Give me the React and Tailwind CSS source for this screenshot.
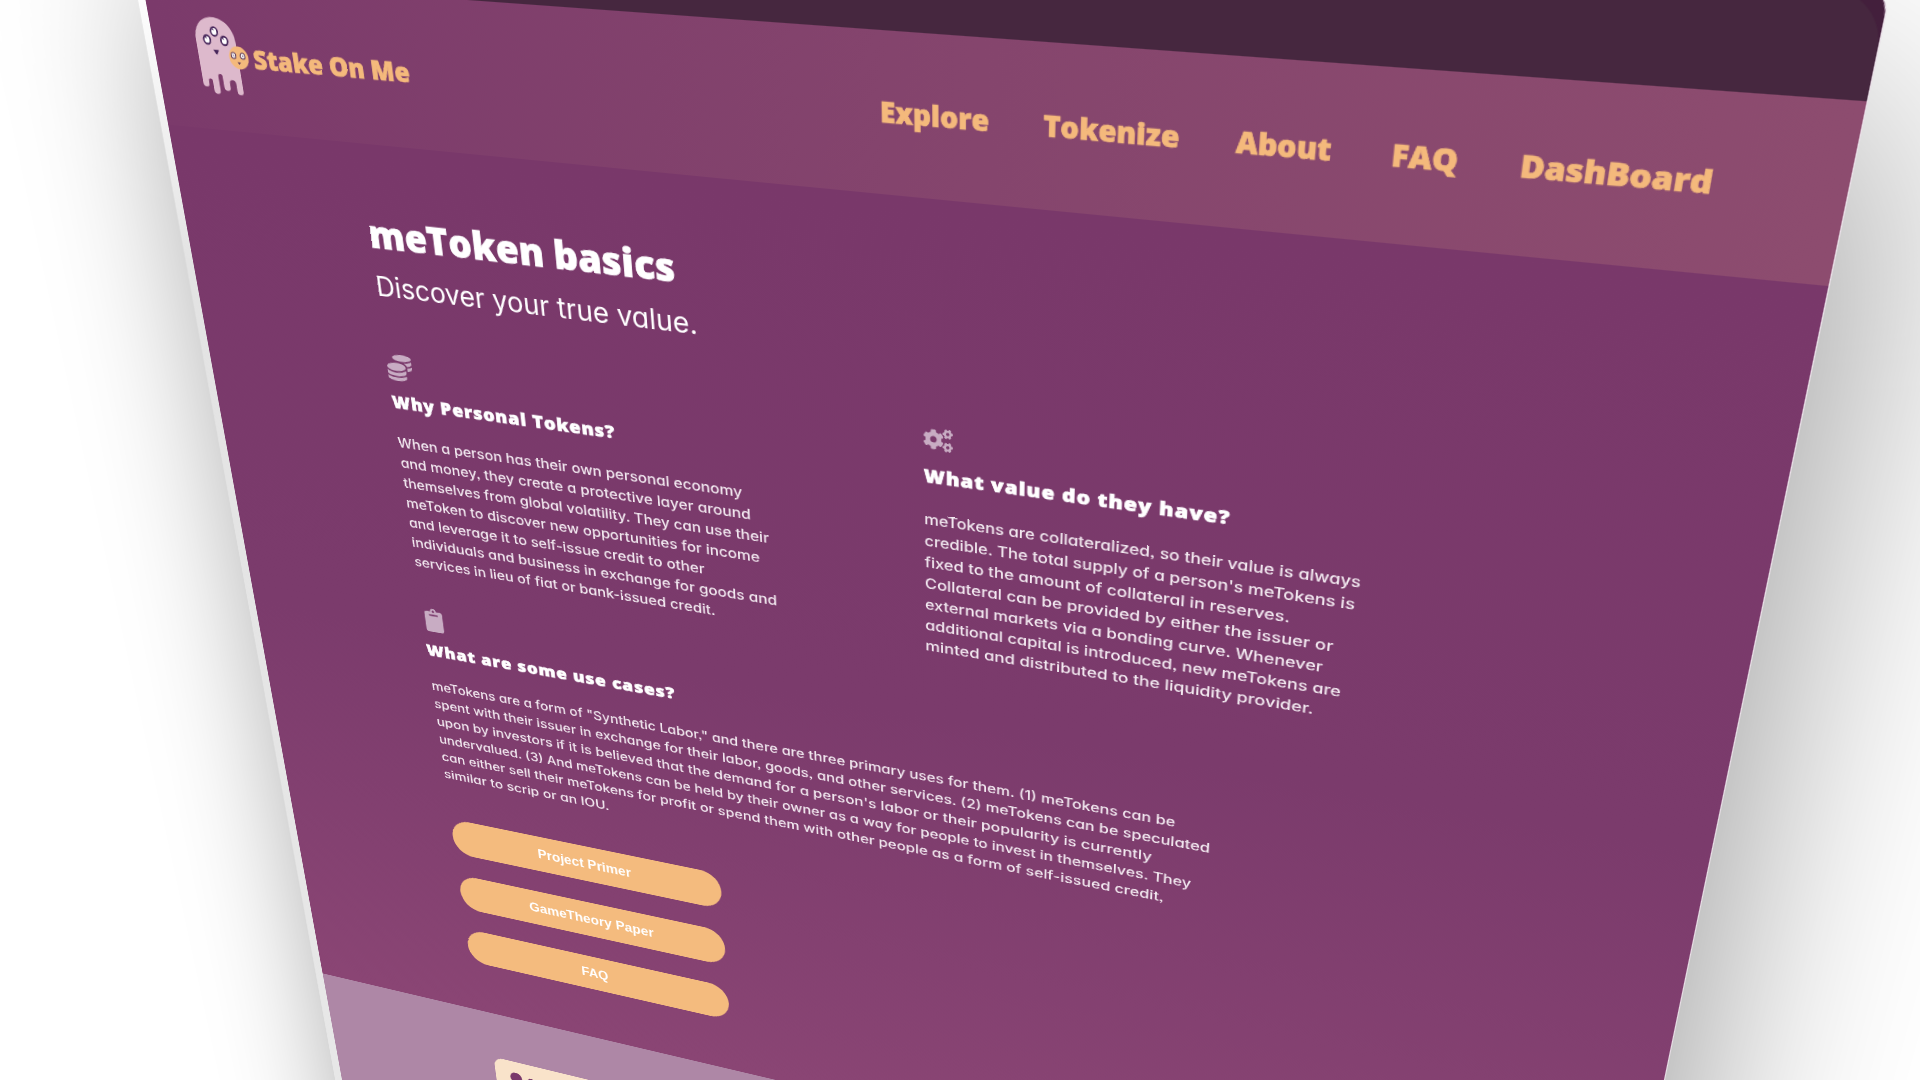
import { useLayoutEffect, useRef, useState } from "react";
import { FaCoins, FaCogs, FaClipboard } from "react-icons/fa";

// One line of text, stretched horizontally so that it spans exactly `width`.
function FitLine({ width, children }) {
  const ref = useRef(null);
  const [scale, setScale] = useState(1);
  useLayoutEffect(() => {
    setScale(width / ref.current.offsetWidth);
  }, [width, children]);
  return (
    <span className="block whitespace-nowrap" style={{ width }}>
      <span ref={ref} className="inline-block origin-left" style={{ transform: `scaleX(${scale})` }}>
        {children}
      </span>
    </span>
  );
}

const NAV = [
  ["Explore", 104],
  ["Tokenize", 122],
  ["About", 82],
  ["FAQ", 55],
  ["DashBoard", 150],
];

const WHY = [
  ["When a person has their own personal economy", 403],
  ["and money, they create a protective layer around", 412],
  ["themselves from global volatility. They can use their", 431],
  ["meToken to discover new opportunities for income", 419],
  ["and leverage it to self-issue credit to other", 356],
  ["individuals and business in exchange for goods and", 437],
  ["services in lieu of fiat or bank-issued credit.", 365],
];

const VALUE = [
  ["meTokens are collateralized, so their value is always", 430],
  ["credible. The total supply of a person's meTokens is", 427],
  ["fixed to the amount of collateral in reserves.", 367],
  ["Collateral can be provided by either the issuer or", 411],
  ["external markets via a bonding curve. Whenever", 402],
  ["additional capital is introduced, new meTokens are", 422],
  ["minted and distributed to the liquidity provider.", 397],
];

const USES = [
  ['meTokens are a form of "Synthetic Labor," and there are three primary uses for them. (1) meTokens can be', 869],
  ["spent with their issuer in exchange for their labor, goods, and other services. (2) meTokens can be speculated", 906],
  ["upon by investors if it is believed that the demand for a person's labor or their popularity is currently", 847],
  ["undervalued. (3) And meTokens can be held by their owner as a way for people to invest in themselves. They", 889],
  ["can either sell their meTokens for profit or spend them with other people as a form of self-issued credit,", 862],
  ["similar to scrip or an IOU.", 216],
];

const BUTTONS = [
  ["Project Primer", 122],
  ["GameTheory Paper", 164],
  ["FAQ", 36],
];

const HEAVY = "font-['Open_Sans','Noto_Sans',sans-serif] font-extrabold [-webkit-text-stroke:0.7px_currentColor]";
const ROUND = "font-['Inter',sans-serif] [font-feature-settings:'cv11'_1,'ss03'_1]";

function Ghost() {
  const eye = (x, y) => (
    <g key={x}>
      <ellipse cx={x} cy={y} rx="3.900" ry="4.300" fill="#fff" stroke="#47265a" strokeWidth="1.9" />
      <path d={`M${x - 2.8} ${y - 2.4}l2 -1l.8 2.800z`} fill="#47265a" />
    </g>
  );
  return (
    <svg className="h-[78px] w-[62px] shrink-0" viewBox="0 0 62 78">
      <path
        fill="#ddb9cc"
        d="M1 24C1 10 11 .3 24 .3S48 10 48 24V73.500a3.500 3.500 0 0 1-7.200 0V66a2.400 2.400 0 0 0-7.600 0V70a3.500 3.500 0 0 1-7.500 0V59.500a2.500 2.500 0 0 0-5.200 0V74a3.600 3.600 0 0 1-7.500 0V65a2.400 2.400 0 0 0-4.800 0V67.500a3.500 3.500 0 0 1-7.200 0z"
      />
      {eye(24.2, 14.4)}
      {eye(14.4, 23)}
      {eye(34.8, 23)}
      <path d="M20 32.800h6.600l-2.400 4.200q-.9.800-1.800 0z" fill="#47265a" />
      <circle cx="49" cy="39" r="11.400" fill="#f4b97c" />
      <ellipse cx="43" cy="37" rx="2.700" ry="3" fill="#fff" stroke="#5d3a5a" strokeWidth="1.100" />
      <ellipse cx="53.800" cy="37" rx="2.700" ry="3" fill="#fff" stroke="#5d3a5a" strokeWidth="1.100" />
      <circle cx="43" cy="37" r=".8" fill="#5d3a5a" />
      <circle cx="53.800" cy="37" r=".8" fill="#5d3a5a" />
      <path d="M46.500 43.500h4l-2 2.600z" fill="#5d3a5a" />
    </svg>
  );
}

function Topic({ icon: Icon, title, titleWidth, lines }) {
  return (
    <article>
      <Icon className="block size-[30px] text-[#c8acc3]" />
      <h3 className={`${HEAVY} mt-[11px] text-[19px] leading-[28px] tracking-[1px] text-white`}>
        <FitLine width={titleWidth}>{title}</FitLine>
      </h3>
      <p className={`${ROUND} mt-[22px] -mb-px text-[15.5px] leading-[24px] font-medium text-[#f3eaf1]`}>
        {lines.map(([text, width]) => (
          <FitLine key={text} width={width}>
            {text}
          </FitLine>
        ))}
      </p>
    </article>
  );
}

export default function App() {
  return (
    <div className="h-[1080px] w-[1920px] overflow-hidden bg-white perspective-[1972px]">
      <div className="relative flex h-[2300px] w-[1600px] origin-top-left flex-col rounded-[28px] shadow-[18px_100px_200px_rgba(0,0,0,0.4)] [transform:translate(141.2px,-23.6px)_rotateX(-26.61deg)_rotateY(-18.27deg)_translateY(-92px)]">
        {/* Side face of the slab */}
        <div className="absolute top-0 -left-[12px] h-full w-[14px] bg-linear-to-b from-white from-[4%] via-[#e3e3e3] via-[17%] to-[#e8e8e8] to-[75%] [clip-path:polygon(3px_0,100%_0,100%_100%,0_100%)]" />

        <div className="relative flex grow flex-col overflow-hidden rounded-[28px] bg-[#ae87a6] shadow-[1px_0_0_#e9dfe7]">
          <div className="h-[92px] shrink-0 bg-[#431f3c] pt-[8px]">
            <div className="h-full rounded-t-[45px] bg-[#46273f]" />
          </div>

          <header className="flex h-[150px] shrink-0 items-center bg-linear-to-r from-[#7b3a6b] via-[#85456d] via-[55%] to-[#8d4c6f] pr-[101px] pb-[3px] pl-[52px] text-[#f4b97c]">
            <Ghost />
            <div className={`${HEAVY} ml-[4px] text-[26px] leading-[36px]`}>
              <FitLine width={179}>Stake On Me</FitLine>
            </div>
            <nav className={`${HEAVY} mb-[2px] ml-auto flex gap-[50px] text-[26px] leading-[36px]`}>
              {NAV.map(([label, width]) => (
                <a key={label}>
                  <FitLine width={width}>{label}</FitLine>
                </a>
              ))}
            </nav>
          </header>

          <main className="h-[1103px] shrink-0 bg-linear-to-b from-[#79386a] via-[#7b3b6c] via-[50%] to-[#8a4574] pt-[70px] pl-[225px]">
            <h1 className={`${HEAVY} text-[40px] leading-[48px] text-white`}>
              <FitLine width={345}>meToken basics</FitLine>
            </h1>
            <p className={`${ROUND} mt-[12px] text-[30px] leading-[40px] text-white`}>
              <FitLine width={365}>Discover your true value.</FitLine>
            </p>

            <div className="mt-[55px] grid grid-cols-[600px_1fr]">
              <Topic icon={FaCoins} title="Why Personal Tokens?" titleWidth={264} lines={WHY} />
              <Topic icon={FaCogs} title="What value do they have?" titleWidth={305} lines={VALUE} />
            </div>
            <div className="mt-[46px]">
              <Topic icon={FaClipboard} title="What are some use cases?" titleWidth={310} lines={USES} />
            </div>

            <div className="mt-[52px] flex w-[350px] flex-col gap-[31px]">
              {BUTTONS.map(([label, width]) => (
                <button
                  key={label}
                  className="flex h-[50px] items-center justify-center rounded-full bg-[#f4bb7e] pt-px pr-[2px] font-['Liberation_Sans',Arial,sans-serif] text-[17.5px] font-bold text-white"
                >
                  <FitLine width={width}>{label}</FitLine>
                </button>
              ))}
            </div>
          </main>

          <section className="grow pt-[72px] pl-[240px]">
            <div className="flex h-[400px] w-[1120px] gap-[8px] rounded-[14px] bg-[#f9e3ca] pt-[18px] pl-[21px]">
              <span className="size-[17px] rounded-full bg-[#7a396b]" />
              <span className="mt-[4px] size-[10px] rounded-full bg-[#7a396b]" />
            </div>
          </section>
        </div>
      </div>
    </div>
  );
}
